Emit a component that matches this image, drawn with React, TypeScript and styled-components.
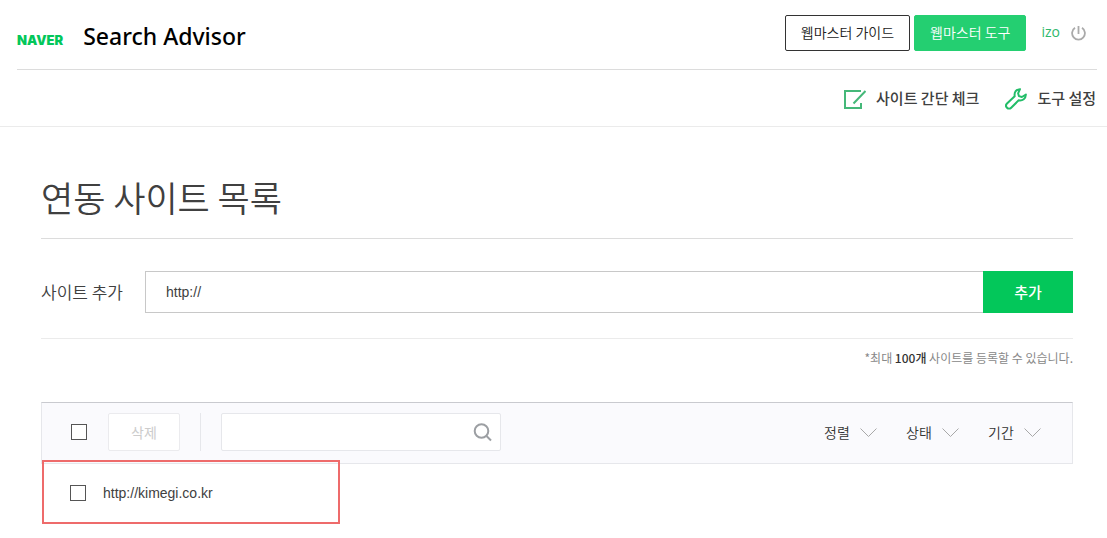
import React from "react";
import styled, { createGlobalStyle, css } from "styled-components";

const GREEN = "#03c75a";
const HANGUL = `"Noto Sans CJK KR", sans-serif`;
const LATIN = `"Liberation Sans", "Noto Sans CJK KR", sans-serif`;

const GlobalStyle = createGlobalStyle`
  *, *::before, *::after { box-sizing: border-box; }
  body { margin: 0; background: #fff; color: #404040; font-family: ${HANGUL}; font-size: 14px; line-height: 20px; }
  button, input, select { font: inherit; color: inherit; margin: 0; }
  button, select { cursor: pointer; }
  a { color: inherit; text-decoration: none; }
  svg { display: block; flex: none; }
`;

const TopBar = styled.header`
  display: flex;
  align-items: center;
  justify-content: space-between;
  height: 70px;
  margin: 0 10px 0 17px;
  padding-bottom: 3px;
  border-bottom: 1px solid #dcdcdc;
`;

const Brand = styled.div`
  display: flex;
  align-items: center;
  gap: 20px;
`;

const Logo = styled.a`
  padding-top: 14px;
  font-family: Inter, sans-serif;
  font-size: 13px;
  font-weight: 900;
  color: ${GREEN};
`;

const ServiceName = styled.a`
  padding-top: 6px;
  font-family: "Noto Sans", sans-serif;
  font-size: 23px;
  line-height: 28px;
  font-weight: 500;
  color: #000;
`;

const Account = styled.div`
  display: flex;
  align-items: center;
  gap: 4px;
  padding-right: 11px;
`;

const LinkButton = styled.a<{ $filled?: boolean }>`
  display: flex;
  align-items: center;
  justify-content: center;
  height: 36px;
  padding: 0 15px 2px;
  border: 1px solid #333;
  border-radius: 2px;
  font-weight: 350;
  color: #222;
  ${(p) =>
    p.$filled &&
    css`
      background: #24cf71;
      border-color: #24cf71;
      color: #fff;
    `}
`;

const UserName = styled.a`
  padding: 0 7px 2px 11px;
  font-family: "Open Sans", sans-serif;
  color: #2fb86c;
`;

const IconButton = styled.button`
  display: flex;
  padding: 0;
  border: 0;
  background: none;
  color: #aaa;
`;

const SubNav = styled.nav`
  display: flex;
  align-items: center;
  justify-content: flex-end;
  gap: 26px;
  height: 57px;
  padding-right: 11px;
  border-bottom: 1px solid #ebebeb;
`;

const SubNavLink = styled.a`
  display: flex;
  align-items: center;
  gap: 10px;
  font-size: 15px;
  font-weight: 500;
  color: #404040;

  svg {
    margin-top: 2px;
  }
`;

const Main = styled.main`
  padding: 0 34px 14px 41px;
`;

const PageTitle = styled.h1`
  margin: 0;
  padding: 44px 0 15px;
  border-bottom: 1px solid #dcdcdc;
  font-size: 35px;
  line-height: 52px;
  font-weight: 350;
`;

const AddForm = styled.form`
  display: flex;
  align-items: center;
  padding: 32px 0 25px;
  border-bottom: 1px solid #ebebeb;
`;

const AddLabel = styled.label`
  flex: none;
  width: 104px;
  font-size: 17px;
  font-weight: 350;
`;

const UrlInput = styled.input`
  flex: 1;
  min-width: 0;
  height: 42px;
  padding: 0 20px;
  border: 1px solid #c8c8c8;
  border-right: 0;
  border-radius: 0;
  font-family: ${LATIN};
`;

const AddButton = styled.button`
  width: 90px;
  height: 42px;
  padding: 0;
  border: 0;
  background: ${GREEN};
  color: #fff;
  font-size: 15px;
  font-weight: 500;
`;

const Note = styled.p`
  margin: 9px 0 34px;
  text-align: right;
  font-size: 12px;
  color: #888;

  strong {
    font-weight: 500;
    color: #333;
  }
`;

const Toolbar = styled.div`
  display: flex;
  align-items: center;
  height: 62px;
  padding: 0 31px 2px 29px;
  border: 1px solid #e6e7eb;
  border-top-color: #c9cacf;
  background: #fafafd;
`;

const Checkbox = styled.input.attrs({ type: "checkbox" })`
  flex: none;
  appearance: none;
  width: 16px;
  height: 16px;
  margin: 0;
  border: 1px solid #555;
  background: #fff;

  &:checked {
    background: ${GREEN};
  }
`;

const DeleteButton = styled.button`
  width: 72px;
  height: 38px;
  margin: 0 20px 0 21px;
  padding: 0;
  border: 1px solid #ebebee;
  border-radius: 2px;
  background: #fff;
  color: #ccc;
`;

const SearchBox = styled.div`
  position: relative;
  padding-left: 20px;
  border-left: 1px solid #e6e7eb;
`;

const SearchInput = styled.input`
  display: block;
  width: 280px;
  height: 38px;
  padding: 0 40px 0 12px;
  border: 1px solid #e6e7eb;
  border-radius: 2px;
  background: #fff;
`;

const SearchButton = styled(IconButton)`
  position: absolute;
  top: 10px;
  right: 9px;
`;

const Filters = styled.div`
  display: flex;
  gap: 29px;
  margin-left: auto;
`;

const Filter = styled.div`
  position: relative;

  select {
    display: block;
    appearance: none;
    padding: 0 27px 0 0;
    border: 0;
    background: none;
    font-weight: 350;
    color: #333;
  }

  svg {
    position: absolute;
    top: 6px;
    right: 0;
    pointer-events: none;
  }
`;

const SiteList = styled.ul`
  margin: -4px 0 0;
  padding: 0 0 0 1px;
  list-style: none;
`;

const SiteRow = styled.li`
  position: relative;
  display: flex;
  align-items: center;
  gap: 17px;
  width: 298px;
  height: 64px;
  padding: 2px 0 0 26px;
  border: 2px solid #ee6b6b;
  font-family: ${LATIN};
`;

const CheckIcon = () => (
  <svg width="22" height="20" viewBox="0 0 22 20" fill="none" stroke="#45b879" strokeWidth="2" aria-hidden="true">
    <path d="M17 2H1v17h16v-5M21.500 2 9.500 14.500" />
  </svg>
);

const WrenchIcon = () => (
  <svg width="22" height="22" viewBox="0 0 22 22" fill="none" stroke="#22bd68" strokeWidth="2" strokeLinejoin="round" aria-hidden="true">
    <path d="M15 1.200C11.200 1.400 9 4 9.700 8.300L2 15.500c-1.200 1.200-1.200 3 0 4.200s3 1.200 4.200 0l7.500-7.400c4 .6 7-1.600 7.200-5.800l-4 2.500-3-.9-.8-2.800z" />
  </svg>
);

const PowerIcon = () => (
  <svg width="15" height="15" viewBox="0 0 15 15" fill="none" stroke="currentColor" strokeWidth="1.800" aria-hidden="true">
    <path d="M4 1.800a6.400 6.400 0 1 0 7 0M7.500 0v8" />
  </svg>
);

const SearchIcon = () => (
  <svg width="19" height="19" viewBox="0 0 19 19" fill="none" stroke="#9c9fa3" strokeWidth="2" aria-hidden="true">
    <circle cx="8.500" cy="8" r="6.800" />
    <path d="m13.500 13 4.500 4.500" />
  </svg>
);

const Chevron = () => (
  <svg width="17" height="10" viewBox="0 0 17 10" fill="none" stroke="#a8a8a8" aria-hidden="true">
    <path d="m.5 .5 8 8 8-8" />
  </svg>
);

const filters = ["정렬", "상태", "기간"];
const sites = ["http://kimegi.co.kr"];

export default function App() {
  return (
    <>
      <GlobalStyle />
      <TopBar>
        <Brand>
          <Logo href="#">NAVER</Logo>
          <ServiceName href="#">Search Advisor</ServiceName>
        </Brand>
        <Account>
          <LinkButton href="#">웹마스터 가이드</LinkButton>
          <LinkButton href="#" $filled>웹마스터 도구</LinkButton>
          <UserName href="#">izo</UserName>
          <IconButton type="button" aria-label="로그아웃">
            <PowerIcon />
          </IconButton>
        </Account>
      </TopBar>
      <SubNav>
        <SubNavLink href="#">
          <CheckIcon />
          사이트 간단 체크
        </SubNavLink>
        <SubNavLink href="#">
          <WrenchIcon />
          도구 설정
        </SubNavLink>
      </SubNav>
      <Main>
        <PageTitle>연동 사이트 목록</PageTitle>
        <AddForm onSubmit={(e) => e.preventDefault()}>
          <AddLabel htmlFor="site-url">사이트 추가</AddLabel>
          <UrlInput id="site-url" type="text" defaultValue="http://" />
          <AddButton type="submit">추가</AddButton>
        </AddForm>
        <Note>
          *최대 <strong>100개</strong> 사이트를 등록할 수 있습니다.
        </Note>
        <Toolbar>
          <Checkbox aria-label="전체 선택" />
          <DeleteButton type="button">삭제</DeleteButton>
          <SearchBox>
            <SearchInput type="text" aria-label="사이트 검색" />
            <SearchButton type="button" aria-label="검색">
              <SearchIcon />
            </SearchButton>
          </SearchBox>
          <Filters>
            {filters.map((name) => (
              <Filter key={name}>
                <select aria-label={name}>
                  <option>{name}</option>
                </select>
                <Chevron />
              </Filter>
            ))}
          </Filters>
        </Toolbar>
        <SiteList>
          {sites.map((url, i) => (
            <SiteRow key={url}>
              <Checkbox id={`site-${i}`} />
              <label htmlFor={`site-${i}`}>{url}</label>
            </SiteRow>
          ))}
        </SiteList>
      </Main>
    </>
  );
}
